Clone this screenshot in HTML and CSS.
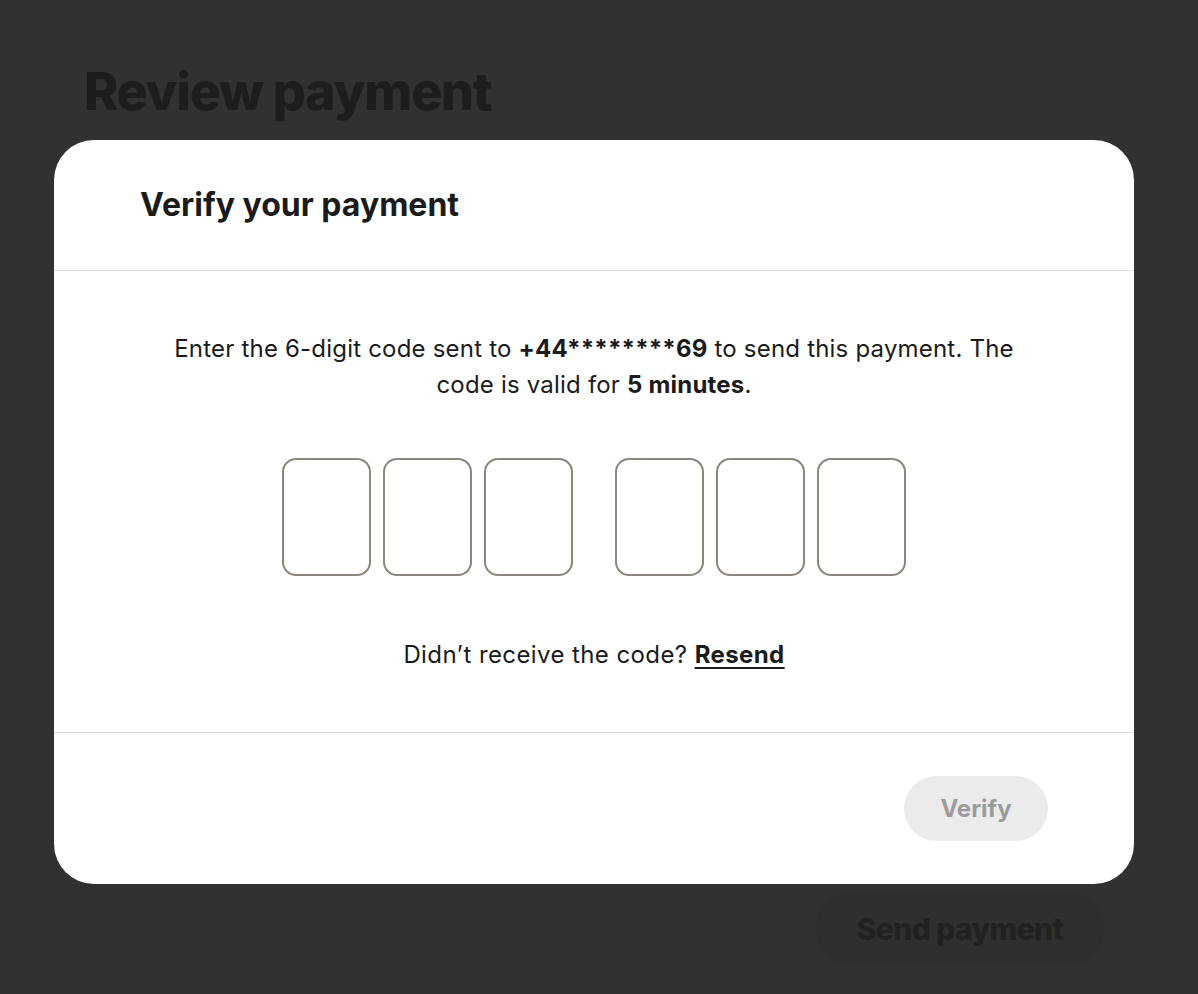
FILE: index.html
```html
<!DOCTYPE html>
<html lang="en">
<head>
<meta charset="utf-8">
<title>Verify your payment</title>
<link rel="stylesheet" href="styles.css">
</head>
<body>
<main class="page">
  <h1 class="page-title">Review payment</h1>
  <div class="page-actions">
    <button class="send-btn" type="button">Send payment</button>
  </div>
</main>
<div class="overlay">
  <section class="modal" role="dialog" aria-labelledby="mt">
    <header class="modal-header">
      <h2 id="mt" class="modal-title">Verify your payment</h2>
    </header>
    <div class="modal-body">
      <p class="intro">Enter the 6-digit code sent to <strong>+44********69</strong> to send this payment. The<br>code is valid for <strong>5 minutes</strong>.</p>
      <div class="code">
        <div class="code-group">
          <input class="digit" type="text" maxlength="1" aria-label="Digit 1">
          <input class="digit" type="text" maxlength="1" aria-label="Digit 2">
          <input class="digit" type="text" maxlength="1" aria-label="Digit 3">
        </div>
        <div class="code-group">
          <input class="digit" type="text" maxlength="1" aria-label="Digit 4">
          <input class="digit" type="text" maxlength="1" aria-label="Digit 5">
          <input class="digit" type="text" maxlength="1" aria-label="Digit 6">
        </div>
      </div>
      <p class="resend">Didn’t receive the code? <a href="#" class="resend-link">Resend</a></p>
    </div>
    <footer class="modal-footer">
      <button class="verify-btn" type="button" disabled>Verify</button>
    </footer>
  </section>
</div>
</body>
</html>
```
FILE: styles.css
```css
* { box-sizing: border-box; }
html, body { margin: 0; padding: 0; }
body {
  width: 1198px;
  height: 994px;
  background: #32312f;
  font-family: Inter, "Noto Sans", sans-serif;
  color: #1b1b1b;
  overflow: hidden;
  position: relative;
}
.page {
  padding: 60px 84px 0;
  height: 994px;
  display: flex;
  flex-direction: column;
}
.page-title {
  margin: 0;
  font-size: 52px;
  font-weight: 800;
  letter-spacing: -1.3px;
  color: #1e1d1b;
  line-height: 64px;
}
.page-actions {
  margin-top: auto;
  margin-bottom: 29px;
  display: flex;
  justify-content: flex-end;
  padding-right: 10px;
}
.send-btn {
  font-family: inherit;
  font-size: 30px;
  font-weight: 800;
  color: #22211f;
  background: #302f2d;
  border: 0;
  border-radius: 40px;
  width: 288px;
  height: 72px;
  letter-spacing: -0.6px;
}
.overlay {
  position: absolute;
  left: 54px;
  top: 140px;
}
.modal {
  width: 1080px;
  height: 744px;
  background: #fff;
  border-radius: 40px;
  display: flex;
  flex-direction: column;
}
.modal-header {
  height: 131px;
  padding: 44px 86px 0;
  border-bottom: 1px solid #dedede;
}
.modal-title {
  margin: 0;
  font-size: 32px;
  font-weight: 700;
  letter-spacing: 0;
  line-height: 42px;
}
.modal-body {
  height: 462px;
  border-bottom: 1px solid #dedede;
  display: flex;
  flex-direction: column;
  align-items: center;
  padding-top: 60px;
}
.intro {
  margin: 0;
  width: 880px;
  text-align: center;
  font-size: 24px;
  line-height: 36px;
  letter-spacing: 0.2px;
  font-weight: 400;
}
.intro strong { font-weight: 700; }
.code {
  margin-top: 55px;
  display: flex;
  gap: 42px;
}
.code-group {
  display: flex;
  gap: 12px;
}
.digit {
  width: 89px;
  height: 118px;
  border: 2px solid #8b877e;
  border-radius: 14px;
  background: #fff;
  font-family: inherit;
  font-size: 32px;
  text-align: center;
  padding: 0;
}
.resend {
  margin: 61px 0 0;
  font-size: 24px;
  line-height: 36px;
  letter-spacing: 0.4px;
}
.resend-link {
  color: #1b1b1b;
  font-weight: 700;
  text-decoration: underline;
  text-underline-offset: 4px;
  text-decoration-thickness: 2px;
}
.modal-footer {
  flex: 1;
  display: flex;
  justify-content: flex-end;
  align-items: flex-start;
  padding: 43px 86px 0;
}
.verify-btn {
  width: 144px;
  height: 65px;
  border: 0;
  border-radius: 33px;
  background: #ebebeb;
  color: #9b9b9b;
  font-family: inherit;
  font-size: 24px;
  font-weight: 700;
  letter-spacing: 0;
}
```
